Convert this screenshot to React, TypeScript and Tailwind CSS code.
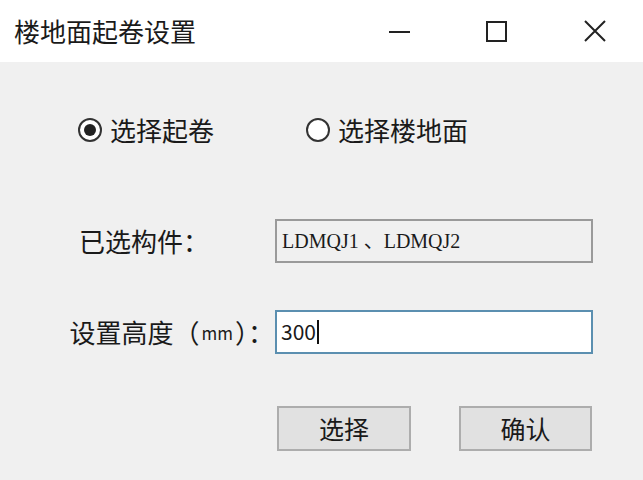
import React from "react"

const font = { fontFamily: '"Noto Sans CJK SC", "Noto Sans", sans-serif' }

const Radio = ({ checked, label }: { checked?: boolean; label: string }) => (
  <label className="flex items-center gap-[8px]">
    <span className="flex h-[24px] w-[24px] items-center justify-center rounded-full border-[2px] border-[#333] bg-white">
      {checked && <span className="h-[12px] w-[12px] rounded-full bg-[#222]" />}
    </span>
    <span className="text-[26px] leading-none text-[#1a1a1a]">{label}</span>
  </label>
)

export default function App() {
  return (
    <div className="h-[480px] w-[643px] overflow-hidden bg-[#f0f0f0]" style={font}>
      {/* title bar */}
      <div className="flex h-[62px] items-center bg-white">
        <div className="pl-[14px] text-[26px] leading-none text-[#1a1a1a]">楼地面起卷设置</div>
        <div className="ml-auto flex h-full items-center">
          <div className="flex w-[92px] justify-center">
            <span className="mt-[2px] h-[2px] w-[21px] bg-[#222]" />
          </div>
          <div className="flex w-[102px] justify-center">
            <span className="h-[21px] w-[21px] border-[2px] border-[#222]" />
          </div>
          <div className="flex w-[96px] justify-center">
            <svg width="22" height="22" viewBox="0 0 22 22" stroke="#222" strokeWidth="2">
              <path d="M1 1 L21 21 M21 1 L1 21" />
            </svg>
          </div>
        </div>
      </div>

      {/* body */}
      <div className="flex flex-col">
        <div className="mt-[55px] flex items-center pl-[78px]">
          <Radio checked label="选择起卷" />
          <div className="ml-[92px]">
            <Radio label="选择楼地面" />
          </div>
        </div>

        <div className="mt-[76px] flex items-center">
          <div className="w-[275px] pl-[79px] text-[26px] leading-none text-[#1a1a1a]">已选构件：</div>
          <div
            className="flex h-[44px] w-[318px] items-center border-[2px] border-[#9a9a9a] bg-[#f0f0f0] pl-[5px] text-[20px] text-[#1a1a1a]"
            style={{ fontFamily: '"Liberation Serif", "Noto Sans CJK SC", serif' }}
          >
            LDMQJ1 、LDMQJ2
          </div>
        </div>

        <div className="mt-[47px] flex items-center">
          <div className="flex w-[275px] items-center justify-end pr-[1px] text-[26px] leading-none text-[#1a1a1a]">
            设置高度（<span className="px-[2px] text-[17px]">mm</span>）：
          </div>
          <div className="flex h-[44px] w-[318px] items-center border-[2px] border-[#5b8fb0] bg-white pl-[4px] text-[21px] text-[#1a1a1a]">
            300<span className="ml-[1px] h-[24px] w-[2px] bg-[#111]" />
          </div>
        </div>

        <div className="mt-[52px] flex pl-[277px]">
          <button className="flex h-[45px] w-[134px] items-center justify-center border-[2px] border-[#adadad] bg-[#e1e1e1] text-[25px] text-[#1a1a1a]">
            选择
          </button>
          <button className="ml-[48px] flex h-[45px] w-[133px] items-center justify-center border-[2px] border-[#adadad] bg-[#e1e1e1] text-[25px] text-[#1a1a1a]">
            确认
          </button>
        </div>
      </div>
    </div>
  )
}
